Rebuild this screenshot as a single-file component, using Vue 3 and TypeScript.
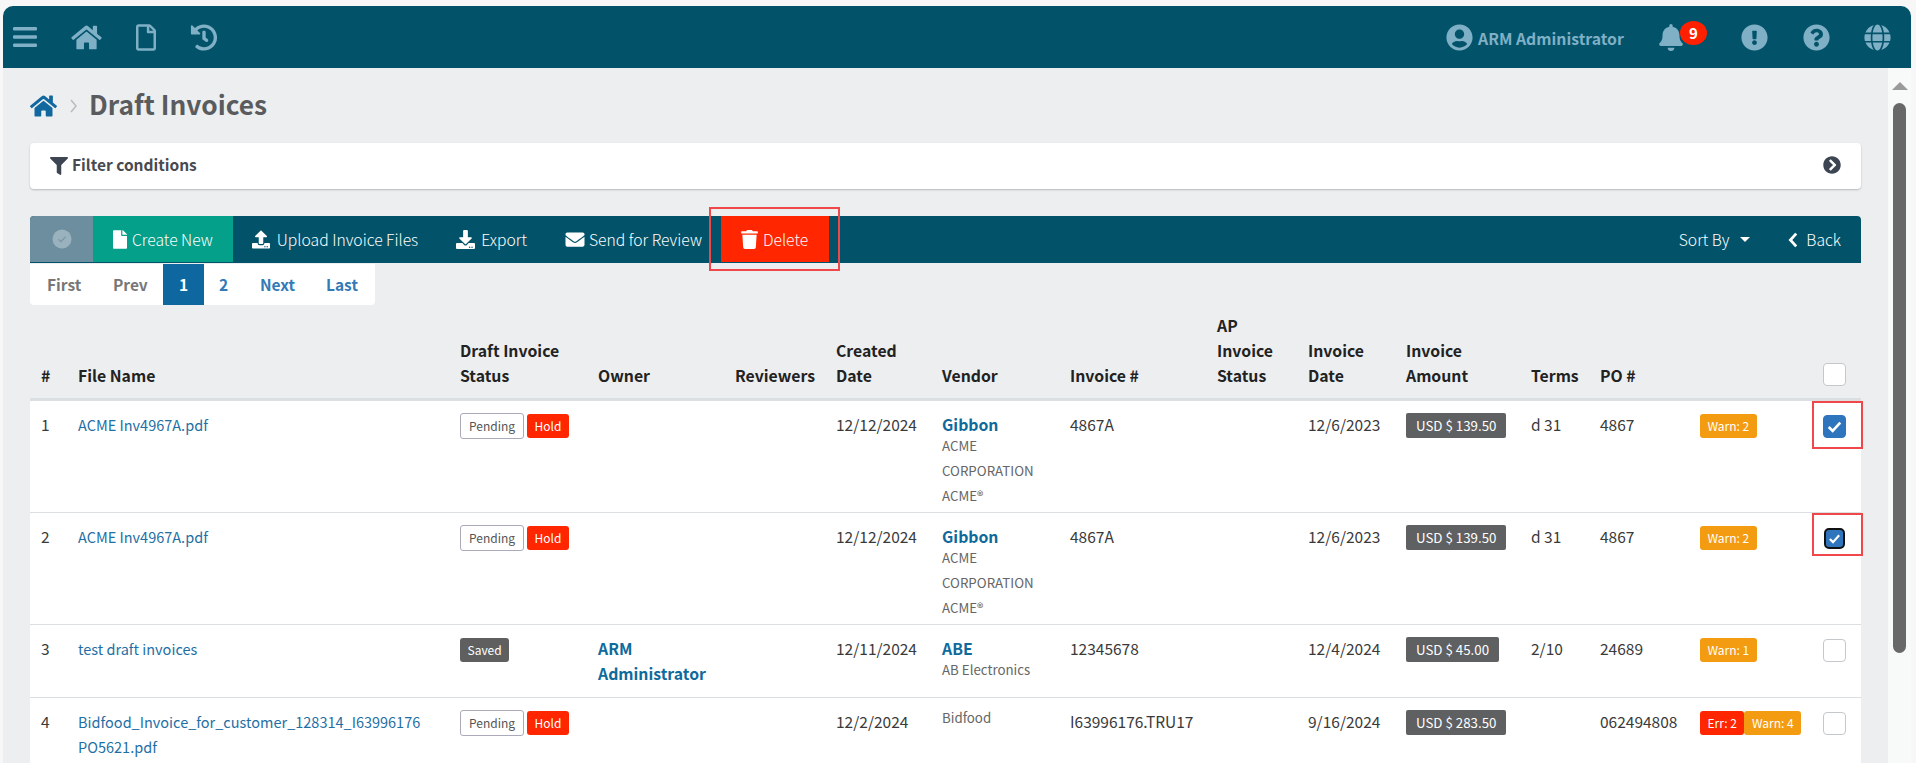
<script setup lang="ts">
const icons: Record<string, string> = {
  home: 'M280.37 148.26L96 300.11V464a16 16 0 0 0 16 16l112.06-.29a16 16 0 0 0 15.92-16V368a16 16 0 0 1 16-16h64a16 16 0 0 1 16 16v95.64a16 16 0 0 0 16 16.05L464 480a16 16 0 0 0 16-16V300L295.67 148.26a12.19 12.19 0 0 0-15.3 0zM571.6 251.47L488 182.56V44.05a12 12 0 0 0-12-12h-56a12 12 0 0 0-12 12v72.61L318.47 43a48 48 0 0 0-61 0L4.34 251.47a12 12 0 0 0-1.6 16.9l25.5 31A12 12 0 0 0 45.15 301l235.22-193.74a12.19 12.19 0 0 1 15.3 0L530.9 301a12 12 0 0 0 16.9-1.6l25.5-31a12 12 0 0 0-1.7-16.93z',
  fileO: 'M369.9 97.9L286 14C277 5 264.8-.1 252.1-.1H48C21.5 0 0 21.5 0 48v416c0 26.5 21.5 48 48 48h288c26.5 0 48-21.5 48-48V131.9c0-12.7-5.1-25-14.1-34zM332.1 128H256V51.9l76.1 76.1zM48 464V48h160v104c0 13.3 10.7 24 24 24h104v288H48z',
  file: 'M224 136V0H24C10.7 0 0 10.7 0 24v464c0 13.3 10.7 24 24 24h336c13.3 0 24-10.7 24-24V160H248c-13.2 0-24-10.8-24-24zm160-14.1v6.1H256V0h6.1c6.4 0 12.5 2.5 17 7l97.9 98c4.5 4.5 7 10.6 7 16.9z',
  history: 'M504 255.531c.253 136.64-111.18 248.372-247.82 248.468-59.015.042-113.223-20.53-155.822-54.911-11.077-8.94-11.905-25.541-1.839-35.607l11.267-11.267c8.609-8.609 22.353-9.551 31.891-1.984C173.062 425.135 212.781 440 256 440c101.705 0 184-82.311 184-184 0-101.705-82.311-184-184-184-48.814 0-93.149 18.969-126.068 49.932l50.754 50.754c10.08 10.08 2.941 27.314-11.313 27.314H24c-8.837 0-16-7.163-16-16V38.627c0-14.254 17.234-21.393 27.314-11.314l49.372 49.372C129.209 34.136 189.552 8 256 8c136.81 0 247.747 110.78 248 247.531zm-180.912 78.784l9.823-12.63c8.138-10.463 6.253-25.542-4.21-33.679L288 256.349V152c0-13.255-10.745-24-24-24h-16c-13.255 0-24 10.745-24 24v135.651l65.409 50.874c10.463 8.137 25.541 6.253 33.679-4.21z',
  user: 'M248 8C111 8 0 119 0 256s111 248 248 248 248-111 248-248S385 8 248 8zm0 96c48.6 0 88 39.4 88 88s-39.4 88-88 88-88-39.4-88-88 39.4-88 88-88zm0 344c-58.7 0-111.3-26.6-146.5-68.2 18.8-35.4 55.6-59.8 98.5-59.8 2.4 0 4.8.4 7.1 1.1 13 4.2 26.6 6.9 40.9 6.9 14.3 0 28-2.7 40.9-6.9 2.3-.7 4.7-1.1 7.1-1.1 42.9 0 79.7 24.4 98.5 59.8C359.3 421.4 306.7 448 248 448z',
  bell: 'M224 512c35.32 0 63.97-28.65 63.97-64H160.03c0 35.35 28.65 64 63.97 64zm215.39-149.71c-19.32-20.76-55.47-51.99-55.47-154.29 0-77.7-54.48-139.9-127.94-155.16V32c0-17.67-14.32-32-31.98-32s-31.98 14.33-31.98 32v20.84C118.56 68.1 64.08 130.3 64.08 208c0 102.3-36.15 133.53-55.47 154.29-6 6.45-8.66 14.16-8.61 21.71.11 16.4 12.98 32 32.1 32h383.8c19.12 0 32-15.6 32.1-32 .05-7.55-2.61-15.27-8.61-21.71z',
  excl: 'M504 256c0 136.997-111.043 248-248 248S8 392.997 8 256C8 119.083 119.043 8 256 8s248 111.083 248 248zm-248 50c-25.405 0-46 20.595-46 46s20.595 46 46 46 46-20.595 46-46-20.595-46-46-46zm-43.673-165.346l7.418 136c.347 6.364 5.609 11.346 11.982 11.346h48.546c6.373 0 11.635-4.982 11.982-11.346l7.418-136c.375-6.874-5.098-12.654-11.982-12.654h-63.383c-6.884 0-12.356 5.78-11.981 12.654z',
  quest: 'M504 256c0 136.997-111.043 248-248 248S8 392.997 8 256C8 119.083 119.043 8 256 8s248 111.083 248 248zM262.655 90c-54.497 0-89.255 22.957-116.549 63.758-3.536 5.286-2.353 12.415 2.715 16.258l34.699 26.31c5.205 3.947 12.621 3.008 16.665-2.122 17.864-22.658 30.113-35.797 57.303-35.797 20.429 0 45.698 13.148 45.698 32.958 0 14.976-12.363 22.667-32.534 33.976C247.128 238.528 216 254.941 216 296v4c0 6.627 5.373 12 12 12h56c6.627 0 12-5.373 12-12v-1.333c0-28.462 83.186-29.647 83.186-106.667 0-58.002-60.165-102-116.531-102zM256 338c-25.365 0-46 20.635-46 46 0 25.364 20.635 46 46 46s46-20.636 46-46c0-25.365-20.635-46-46-46z',
  globe: 'M336.5 160C322 70.7 287.8 8 248 8s-74 62.7-88.5 152h177zM152 256c0 22.2 1.2 43.5 3.3 64h185.3c2.1-20.5 3.3-41.8 3.3-64s-1.2-43.5-3.3-64H155.3c-2.1 20.5-3.3 41.8-3.3 64zm324.7-96c-28.6-67.9-86.5-120.4-158-141.6 24.4 33.8 41.2 84.7 50 141.6h108zM177.2 18.4C105.8 39.6 47.8 92.1 19.3 160h108c8.7-56.9 25.5-107.8 49.9-141.6zM487.4 192H372.7c2.1 21 3.3 42.5 3.3 64s-1.2 43-3.3 64h114.6c5.5-20.5 8.6-41.8 8.6-64s-3.1-43.5-8.5-64zM120 256c0-21.5 1.2-43 3.3-64H8.6C3.2 212.5 0 233.8 0 256s3.2 43.5 8.6 64h114.6c-2-21-3.2-42.5-3.2-64zm39.5 96c14.5 89.3 48.7 152 88.5 152s74-62.7 88.5-152h-177zm159.3 141.6c71.4-21.2 129.4-73.7 158-141.6h-108c-8.8 56.9-25.6 107.8-50 141.6zM19.3 352c28.6 67.9 86.5 120.4 158 141.6-24.4-33.8-41.2-84.7-50-141.6h-108z',
  filter: 'M487.976 0H24.028C2.71 0-8.047 25.866 7.058 40.971L192 225.941V432c0 7.831 3.821 15.17 10.237 19.662l80 55.98C298.02 518.69 320 507.493 320 487.98V225.941l184.947-184.97C520.021 25.896 509.338 0 487.976 0z',
  upload: 'M296 384h-80c-13.3 0-24-10.7-24-24V192h-87.7c-17.8 0-26.7-21.5-14.1-34.1L242.3 5.7c7.5-7.5 19.8-7.5 27.3 0l152.2 152.2c12.6 12.6 3.7 34.1-14.1 34.1H320v168c0 13.3-10.7 24-24 24zm216-8v112c0 13.3-10.7 24-24 24H24c-13.3 0-24-10.7-24-24V376c0-13.3 10.7-24 24-24h136v8c0 30.9 25.1 56 56 56h80c30.9 0 56-25.1 56-56v-8h136c13.3 0 24 10.7 24 24zm-124 88c0-11-9-20-20-20s-20 9-20 20 9 20 20 20 20-9 20-20zm64 0c0-11-9-20-20-20s-20 9-20 20 9 20 20 20 20-9 20-20z',
  download: 'M216 0h80c13.3 0 24 10.7 24 24v168h87.7c17.8 0 26.7 21.5 14.1 34.1L269.7 378.3c-7.5 7.5-19.8 7.5-27.3 0L90.1 226.1c-12.6-12.6-3.7-34.1 14.1-34.1H192V24c0-13.3 10.7-24 24-24zm296 376v112c0 13.3-10.7 24-24 24H24c-13.3 0-24-10.7-24-24V376c0-13.3 10.7-24 24-24h146.7l49 49c20.1 20.1 52.5 20.1 72.6 0l49-49H488c13.3 0 24 10.7 24 24zm-124 88c0-11-9-20-20-20s-20 9-20 20 9 20 20 20 20-9 20-20zm64 0c0-11-9-20-20-20s-20 9-20 20 9 20 20 20 20-9 20-20z',
  envelope: 'M502.3 190.8c3.9-3.1 9.7-.2 9.7 4.7V400c0 26.5-21.5 48-48 48H48c-26.5 0-48-21.5-48-48V195.6c0-5 5.7-7.8 9.7-4.7 22.4 17.4 52.1 39.5 154.1 113.6 21.1 15.4 56.7 47.8 92.2 47.6 35.7.3 72-32.8 92.3-47.6 102-74.1 131.6-96.3 154-113.7zM256 320c23.2.4 56.6-29.2 73.4-41.4 132.7-96.3 142.8-104.7 173.4-128.7 5.8-4.5 9.2-11.5 9.2-18.9v-19c0-26.5-21.5-48-48-48H48C21.5 64 0 85.5 0 112v19c0 7.4 3.4 14.3 9.2 18.9 30.6 23.9 40.7 32.4 173.4 128.7 16.8 12.2 50.2 41.8 73.4 41.4z',
  trash: 'M432 32H312l-9.4-18.7A24 24 0 0 0 281.1 0H166.8a23.72 23.72 0 0 0-21.4 13.3L136 32H16A16 16 0 0 0 0 48v32a16 16 0 0 0 16 16h416a16 16 0 0 0 16-16V48a16 16 0 0 0-16-16zM53.2 467a48 48 0 0 0 47.9 45h245.8a48 48 0 0 0 47.9-45L416 128H32z',
  chevCircle: 'M256 8c137 0 248 111 248 248S393 504 256 504 8 393 8 256 119 8 256 8zm113.9 231L234.4 103.5c-9.4-9.4-24.6-9.4-33.9 0l-17 17c-9.4 9.4-9.4 24.6 0 33.9L285.1 256 183.5 357.6c-9.4 9.4-9.4 24.6 0 33.9l17 17c9.4 9.4 24.6 9.4 33.9 0L369.9 273c9.4-9.4 9.4-24.6 0-34z'
}

interface Row {
  n: number
  file: string[]
  status: string
  hold: boolean
  owner: string
  date: string
  vendor: string
  vendorLink: boolean
  vendorSub: string[]
  inv: string
  invDate: string
  amount: string
  terms: string
  po: string
  err: number
  warn: number
  check: string
}

const rows: Row[] = [
  { n: 1, file: ['ACME Inv4967A.pdf'], status: 'Pending', hold: true, owner: '', date: '12/12/2024', vendor: 'Gibbon', vendorLink: true, vendorSub: ['ACME', 'CORPORATION', 'ACME®'], inv: '4867A', invDate: '12/6/2023', amount: 'USD $ 139.50', terms: 'd 31', po: '4867', err: 0, warn: 2, check: 'on' },
  { n: 2, file: ['ACME Inv4967A.pdf'], status: 'Pending', hold: true, owner: '', date: '12/12/2024', vendor: 'Gibbon', vendorLink: true, vendorSub: ['ACME', 'CORPORATION', 'ACME®'], inv: '4867A', invDate: '12/6/2023', amount: 'USD $ 139.50', terms: 'd 31', po: '4867', err: 0, warn: 2, check: 'focus' },
  { n: 3, file: ['test draft invoices'], status: 'Saved', hold: false, owner: 'ARM Administrator', date: '12/11/2024', vendor: 'ABE', vendorLink: true, vendorSub: ['AB Electronics'], inv: '12345678', invDate: '12/4/2024', amount: 'USD $ 45.00', terms: '2/10', po: '24689', err: 0, warn: 1, check: 'off' },
  { n: 4, file: ['Bidfood_Invoice_for_customer_128314_I63996176', 'PO5621.pdf'], status: 'Pending', hold: true, owner: '', date: '12/2/2024', vendor: 'Bidfood', vendorLink: false, vendorSub: [], inv: 'I63996176.TRU17', invDate: '9/16/2024', amount: 'USD $ 283.50', terms: '', po: '062494808', err: 2, warn: 4, check: 'off' }
]

const colWidths: number[] = [48, 382, 138, 137, 101, 106, 128, 147, 91, 98, 125, 69, 100, 123, 38]
</script>

<template>
  <div class="page">
    <header class="topbar">
      <div class="top-left">
        <svg class="menu" viewBox="0 0 24 20"><rect y="0" width="24" height="3.4" rx="1.2" /><rect y="8.3" width="24" height="3.4" rx="1.2" /><rect y="16.6" width="24" height="3.4" rx="1.2" /></svg>
        <svg class="ti home" viewBox="0 0 576 512"><path :d="icons.home" /></svg>
        <svg class="ti file" viewBox="0 0 384 512"><path :d="icons.fileO" /></svg>
        <svg class="ti hist" viewBox="0 0 512 512"><path :d="icons.history" /></svg>
      </div>
      <div class="top-right">
        <svg class="ti usr" viewBox="0 0 496 512"><path :d="icons.user" /></svg>
        <span class="uname">ARM Administrator</span>
        <span class="bell-wrap">
          <svg class="ti bell" viewBox="0 0 448 512"><path :d="icons.bell" /></svg>
          <span class="badge">9</span>
        </span>
        <svg class="ti round ex" viewBox="0 0 512 512"><path :d="icons.excl" /></svg>
        <svg class="ti round qu" viewBox="0 0 512 512"><path :d="icons.quest" /></svg>
        <svg class="ti round gl" viewBox="0 0 496 512"><path :d="icons.globe" /></svg>
      </div>
    </header>

    <div class="body-row">
      <main class="content">
        <div class="crumb">
          <svg class="crumb-home" viewBox="0 0 576 512"><path :d="icons.home" /></svg>
          <svg class="crumb-sep" viewBox="0 0 7 14"><path d="M1 1l5 6-5 6" /></svg>
          <h1>Draft Invoices</h1>
        </div>

        <div class="filter">
          <span class="filter-l">
            <svg class="filter-ic" viewBox="0 0 512 512"><path :d="icons.filter" /></svg>
            <span class="filter-t">Filter conditions</span>
          </span>
          <svg class="filter-arrow" viewBox="0 0 512 512"><path :d="icons.chevCircle" /></svg>
        </div>

        <div class="toolbar">
          <div class="tb-check">
            <svg viewBox="0 0 20 20"><circle cx="10" cy="10" r="9.5" fill="#9ab2bd" /><path d="M6.5 10.3l2.4 2.4 4.6-5" fill="none" stroke="#7d98a6" stroke-width="1.3" /></svg>
          </div>
          <div class="tb-item create"><svg class="tb-ic ic-file" viewBox="0 0 384 512"><path :d="icons.file" /></svg>Create New</div>
          <div class="tb-item"><svg class="tb-ic ic-up" viewBox="0 0 512 512"><path :d="icons.upload" /></svg>Upload Invoice Files</div>
          <div class="tb-item"><svg class="tb-ic ic-down" viewBox="0 0 512 512"><path :d="icons.download" /></svg>Export</div>
          <div class="tb-item"><svg class="tb-ic ic-env" viewBox="0 0 512 512"><path :d="icons.envelope" /></svg>Send for Review</div>
          <div class="tb-item del">
            <svg class="tb-ic ic-trash" viewBox="0 0 448 512"><path :d="icons.trash" /></svg>Delete
            <span class="mark mark-del"></span>
          </div>
          <div class="tb-right">
            <span class="sort">Sort By<i class="caret"></i></span>
            <span class="back">
              <svg viewBox="0 0 10 16"><path d="M8.2 1.6L2.4 8l5.8 6.4" /></svg>Back
            </span>
          </div>
        </div>

        <nav class="pager">
          <a class="pg off first">First</a>
          <a class="pg off prev">Prev</a>
          <a class="pg cur">1</a>
          <a class="pg two">2</a>
          <a class="pg next">Next</a>
          <a class="pg last">Last</a>
        </nav>

        <table class="grid">
          <colgroup>
            <col v-for="(w, i) in colWidths" :key="i" :style="{ width: w + 'px' }" />
          </colgroup>
          <thead>
            <tr>
              <th class="first-col">#</th>
              <th>File Name</th>
              <th>Draft Invoice<br />Status</th>
              <th>Owner</th>
              <th>Reviewers</th>
              <th>Created<br />Date</th>
              <th>Vendor</th>
              <th>Invoice #</th>
              <th>AP<br />Invoice<br />Status</th>
              <th>Invoice<br />Date</th>
              <th>Invoice<br />Amount</th>
              <th>Terms</th>
              <th>PO #</th>
              <th></th>
              <th><span class="cb head-cb"></span></th>
            </tr>
          </thead>
          <tbody>
            <tr v-for="r in rows" :key="r.n">
              <td class="first-col">{{ r.n }}</td>
              <td><template v-for="(f, i) in r.file" :key="i"><a class="file-link">{{ f }}</a><br /></template></td>
              <td>
                <div class="chips">
                  <span class="chip" :class="r.status === 'Pending' ? 'pending' : 'saved'">{{ r.status }}</span>
                  <span v-if="r.hold" class="chip hold">Hold</span>
                </div>
              </td>
              <td><strong v-if="r.owner" class="owner">ARM<br />Administrator</strong></td>
              <td></td>
              <td>{{ r.date }}</td>
              <td>
                <strong v-if="r.vendorLink" class="vendor">{{ r.vendor }}</strong>
                <span v-else class="sub plain">{{ r.vendor }}</span>
                <span v-for="s in r.vendorSub" :key="s" class="sub block">{{ s }}</span>
              </td>
              <td>{{ r.inv }}</td>
              <td></td>
              <td>{{ r.invDate }}</td>
              <td><span class="amount">{{ r.amount }}</span></td>
              <td>{{ r.terms }}</td>
              <td>{{ r.po }}</td>
              <td>
                <div class="issues">
                  <span v-if="r.err" class="chip err">Err: {{ r.err }}</span>
                  <span class="chip warn">Warn: {{ r.warn }}</span>
                </div>
              </td>
              <td class="cb-cell">
                <span class="cb" :class="r.check">
                  <svg v-if="r.check !== 'off'" viewBox="0 0 16 16"><path d="M3.6 8.4l3 3 5.8-6.4" /></svg>
                </span>
                <span v-if="r.n === 1" class="mark mark-c1"></span>
                <span v-if="r.n === 2" class="mark mark-c2"></span>
              </td>
            </tr>
          </tbody>
        </table>
      </main>

      <aside class="scroll">
        <i class="scroll-up"></i>
        <i class="scroll-thumb"></i>
      </aside>
    </div>
  </div>
</template>

<style>
html, body { margin: 0; background: #fff; overflow: hidden; }
</style>

<style scoped>
.page {
  width: 1916px;
  height: 763px;
  overflow: hidden;
  box-sizing: border-box;
  padding: 6px 5px 0 3px;
  background: #f7f7f7;
  font-family: "Noto Sans CJK SC", "Noto Sans", sans-serif;
  color: #333;
}
.topbar {
  height: 62px;
  background: #02536a;
  border-radius: 10px 10px 0 0;
  display: flex;
  justify-content: space-between;
  align-items: center;
  padding: 0 20px 0 10px;
}
.top-left, .top-right { display: flex; align-items: center; }
.ti { height: 27px; fill: #7fb0c6; display: block; }
.menu { width: 24px; height: 20px; fill: #7fb0c6; display: block; }
.home { width: 31px; margin-left: 34px; }
.file { width: 20px; margin-left: 34px; }
.hist { width: 28px; margin-left: 34px; }
.usr { width: 27px; }
.uname { margin-left: 5px; font-size: 15.8px; font-weight: 700; color: #7fb0c6; line-height: 27px; padding-top: 3px; width: 146px; white-space: nowrap; }
.bell-wrap { position: relative; display: block; margin-left: 35px; width: 24px; }
.bell { width: 24px; }
.badge {
  position: absolute;
  left: 21px;
  top: -3px;
  width: 27px;
  height: 24px;
  border-radius: 50%;
  background: #ff2000;
  color: #fff;
  font-size: 15px;
  font-weight: 700;
  line-height: 24px;
  text-align: center;
}
.round { width: 27px; }
.ex { margin-left: 58px; }
.qu { margin-left: 35px; }
.gl { margin-left: 34px; }

.body-row { display: flex; height: 695px; }
.content {
  flex: 1;
  min-width: 0;
  box-sizing: border-box;
  padding: 0 27px;
  background: #eceef0;
  overflow: hidden;
}
.crumb { display: flex; align-items: center; height: 75px; }
.crumb-home { width: 27px; height: 24px; fill: #10689f; }
.crumb-sep { width: 7px; height: 14px; margin-left: 13px; fill: none; stroke: #b9bbbd; stroke-width: 1.5; }
h1 { margin: 0 0 4px 12px; font-size: 26.3px; line-height: 36px; font-weight: 700; color: #5a5b5e; }

.filter {
  height: 46px;
  background: #fff;
  border-radius: 4px;
  box-shadow: 0 1px 2px rgba(0, 0, 0, .22);
  display: flex;
  align-items: center;
  justify-content: space-between;
  padding: 0 20px;
  box-sizing: border-box;
}
.filter-l { display: flex; align-items: center; font-size: 15.5px; font-weight: 700; color: #484a4f; }
.filter-t { line-height: 20px; padding-bottom: 4px; }
.filter-ic { width: 18px; height: 18px; fill: #3d4552; margin-right: 4px; }
.filter-arrow { width: 18px; height: 18px; fill: #3d4552; margin-bottom: 3px; }

.toolbar {
  margin-top: 27px;
  height: 47px;
  background: #02536a;
  border-radius: 4px 4px 0 0;
  display: flex;
  color: #fff;
  font-size: 15.7px;
  font-weight: 300;
}
.tb-check {
  width: 63px;
  height: 46px;
  background: #6d8e9f;
  border-radius: 4px 0 0 0;
  display: flex;
  align-items: center;
  justify-content: center;
}
.tb-check svg { width: 20px; height: 20px; }
.tb-item {
  height: 46px;
  padding: 0 19px;
  display: flex;
  align-items: center;
  white-space: nowrap;
  position: relative;
}
.tb-ic { height: 19px; fill: #fff; flex: none; }
.ic-file { width: 14px; margin-right: 5px; }
.ic-up { width: 18px; margin-right: 7px; }
.ic-down { width: 19px; margin-right: 6px; }
.ic-env { width: 20px; margin-right: 4px; }
.ic-trash { width: 17px; margin-right: 5px; }
.create { background: #04a08a; padding: 0 20px; }
.del { background: #ff2600; padding: 0 21px 0 20px; }
.tb-right { margin-left: auto; display: flex; align-items: center; padding-right: 20px; }
.sort { display: flex; align-items: center; }
.caret { width: 0; height: 0; border: 5px solid transparent; border-top-color: #fff; border-bottom: 0; margin-left: 11px; }
.back { display: flex; align-items: center; margin-left: 38px; }
.back svg { width: 10px; height: 16px; fill: none; stroke: #fff; stroke-width: 2.8; margin-right: 8px; }

.mark { position: absolute; border: 2px solid #f0474b; box-sizing: border-box; pointer-events: none; }
.mark-del { left: -12px; top: -9px; width: 131px; height: 64px; }
.mark-c1 { left: -11px; top: 0; width: 51px; height: 48px; }
.mark-c2 { left: -11px; top: 0; width: 51px; height: 43px; }

.pager {
  margin-top: 1px;
  width: 345px;
  height: 41px;
  background: #fff;
  border-radius: 0 0 4px 4px;
  display: flex;
  align-items: center;
  font-size: 15.5px;
  font-weight: 700;
  color: #337ab7;
  position: relative;
}
.pg { display: block; line-height: 41px; text-align: center; }
.off { color: #777; }
.first { width: 51px; padding-left: 17px; text-align: left; box-sizing: border-box; }
.prev { width: 82px; padding-left: 32px; box-sizing: border-box; text-align: left; }
.cur { width: 41px; background: #0e689f; color: #fff; }
.two { width: 41px; padding-right: 2px; box-sizing: border-box; }
.next { width: 66px; padding-left: 15px; box-sizing: border-box; text-align: left; }
.last { flex: 1; padding-left: 15px; box-sizing: border-box; text-align: left; }

.grid {
  margin-top: 8px;
  width: 1831px;
  table-layout: fixed;
  border-collapse: collapse;
  font-size: 15.5px;
  line-height: 25px;
}
th {
  text-align: left;
  vertical-align: bottom;
  padding: 0 0 10px;
  font-weight: 700;
  font-size: 15.8px;
  color: #222;
  border-bottom: 3px solid #dcdfe1;
  white-space: nowrap;
}
td {
  vertical-align: top;
  padding: 11px 0 0;
  background: #fff;
  border-bottom: 1px solid #dcdfe1;
  color: #3a3a3a;
}
tbody tr:nth-child(1) td, tbody tr:nth-child(2) td { height: 100px; }
tbody tr:nth-child(3) td { height: 61px; }
tbody tr:nth-child(4) td { height: 90px; }
.first-col { padding-left: 11px; }
.file-link { color: #1f6fa5; font-size: 14.5px; }
.owner, .vendor { color: #0f6a9c; font-weight: 700; font-size: 15.8px; }
.vendor { display: block; margin-bottom: -4px; }
.sub { color: #666; font-size: 13.3px; }
.block { display: block; }
.plain { display: block; margin-top: -4px; }
.chips, .issues { display: flex; align-items: center; height: 26px; margin-top: 1px; white-space: nowrap; }
.chips .hold { margin-left: 3px; }
.chip {
  display: inline-block;
  box-sizing: border-box;
  height: 24px;
  line-height: 24px;
  padding: 0 7.5px;
  border-radius: 3px;
  font-size: 12px;
  color: #fff;
}
.pending { height: 26px; line-height: 24px; background: #fff; border: 1px solid #aab; color: #555; padding: 0 8px; }
.saved { background: #5f5f5f; }
.hold, .err { background: #ff2600; }
.warn { background: #f39c12; }
.amount {
  display: inline-block;
  height: 25px;
  line-height: 25px;
  padding: 0 10px;
  background: #5f6062;
  color: #fff;
  font-size: 13.3px;
  border-radius: 2px;
  white-space: nowrap;
}
.cb-cell { position: relative; }
.cb {
  display: block;
  box-sizing: border-box;
  width: 23px;
  height: 23px;
  margin-top: 3px;
  border: 1px solid #c5c8cb;
  border-radius: 4px;
  background: #fff;
}
.head-cb { margin: 0 0 2px; }
.cb svg { display: block; width: 100%; height: 100%; fill: none; stroke: #fff; stroke-width: 2; }
.on { background: #2f75bd; border-color: #2f75bd; }
.focus { background: #2f75bd; border: 2px solid #111; width: 21px; height: 21px; margin: 4px 0 0 1px; border-radius: 5px; }

.scroll {
  width: 23px;
  flex: none;
  background: #f8f9f9;
  position: relative;
}
.scroll-up {
  position: absolute;
  left: 4px;
  top: 14px;
  width: 0;
  height: 0;
  border: 8px solid transparent;
  border-top: 0;
  border-bottom-color: #9a9a9a;
}
.scroll-thumb {
  position: absolute;
  left: 5px;
  top: 35px;
  width: 13px;
  height: 550px;
  border-radius: 7px;
  background: #686868;
}
</style>
